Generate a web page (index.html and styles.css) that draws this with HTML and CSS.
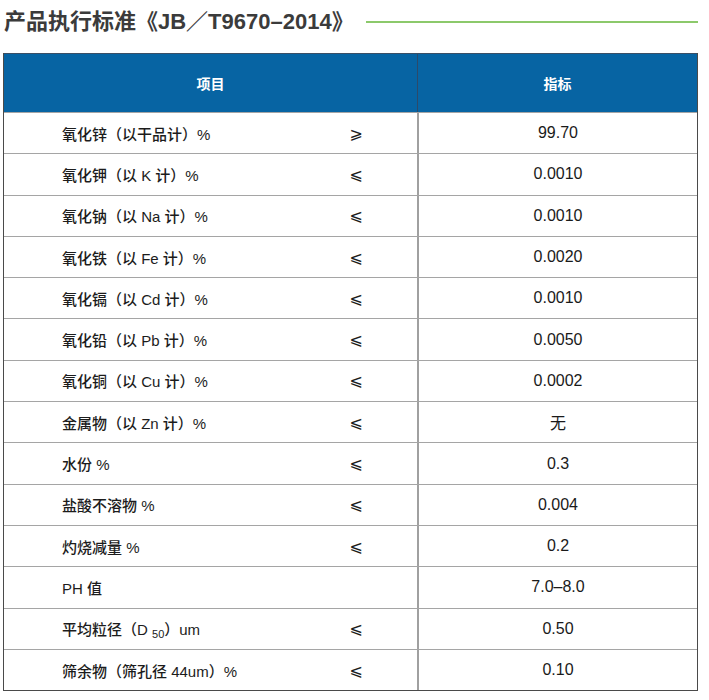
FILE: index.html
```html
<!DOCTYPE html>
<html lang="zh-CN">
<head>
<meta charset="utf-8">
<title>产品执行标准</title>
<link rel="stylesheet" href="styles.css">
</head>
<body>
<div class="page">
  <div class="title-bar">
    <h1 class="title">产品执行标准《JB／T9670–2014》</h1>
    <span class="title-line"></span>
  </div>
  <div class="spec-table">
    <div class="row head">
      <div class="cell-left">项目</div>
      <div class="cell-value">指标</div>
    </div>
    <div class="row">
      <div class="cell-left"><span class="name">氧化锌（以干品计）%</span><span class="sign">⩾</span></div>
      <div class="cell-value">99.70</div>
    </div>
    <div class="row">
      <div class="cell-left"><span class="name">氧化钾（以 K 计）%</span><span class="sign">⩽</span></div>
      <div class="cell-value">0.0010</div>
    </div>
    <div class="row">
      <div class="cell-left"><span class="name">氧化钠（以 Na 计）%</span><span class="sign">⩽</span></div>
      <div class="cell-value">0.0010</div>
    </div>
    <div class="row">
      <div class="cell-left"><span class="name">氧化铁（以 Fe 计）%</span><span class="sign">⩽</span></div>
      <div class="cell-value">0.0020</div>
    </div>
    <div class="row">
      <div class="cell-left"><span class="name">氧化镉（以 Cd 计）%</span><span class="sign">⩽</span></div>
      <div class="cell-value">0.0010</div>
    </div>
    <div class="row">
      <div class="cell-left"><span class="name">氧化铅（以 Pb 计）%</span><span class="sign">⩽</span></div>
      <div class="cell-value">0.0050</div>
    </div>
    <div class="row">
      <div class="cell-left"><span class="name">氧化铜（以 Cu 计）%</span><span class="sign">⩽</span></div>
      <div class="cell-value">0.0002</div>
    </div>
    <div class="row">
      <div class="cell-left"><span class="name">金属物（以 Zn 计）%</span><span class="sign">⩽</span></div>
      <div class="cell-value">无</div>
    </div>
    <div class="row">
      <div class="cell-left"><span class="name">水份 %</span><span class="sign">⩽</span></div>
      <div class="cell-value">0.3</div>
    </div>
    <div class="row">
      <div class="cell-left"><span class="name">盐酸不溶物 %</span><span class="sign">⩽</span></div>
      <div class="cell-value">0.004</div>
    </div>
    <div class="row">
      <div class="cell-left"><span class="name">灼烧减量 %</span><span class="sign">⩽</span></div>
      <div class="cell-value">0.2</div>
    </div>
    <div class="row">
      <div class="cell-left"><span class="name">PH 值</span><span class="sign"></span></div>
      <div class="cell-value">7.0–8.0</div>
    </div>
    <div class="row">
      <div class="cell-left"><span class="name">平均粒径（D <sub>50</sub>）um</span><span class="sign">⩽</span></div>
      <div class="cell-value">0.50</div>
    </div>
    <div class="row">
      <div class="cell-left"><span class="name">筛余物（筛孔径 44um）%</span><span class="sign">⩽</span></div>
      <div class="cell-value">0.10</div>
    </div>
  </div>
</div>
</body>
</html>
```

FILE: styles.css
```css
html, body {
  margin: 0;
  padding: 0;
  background: #ffffff;
}

.page {
  width: 709px;
  padding: 0 11px 0 3px;
  box-sizing: border-box;
  font-family: "Liberation Sans", "Noto Sans CJK SC", sans-serif;
  color: #1c1c1c;
}

.title-bar {
  display: flex;
  align-items: center;
  height: 44px;
  margin-bottom: 9px;
}

.title {
  margin: 0 0 0 1px;
  font-size: 22px;
  line-height: 24px;
  font-weight: 700;
  color: #3b3b3b;
  white-space: nowrap;
}

.title-line {
  flex: 1;
  height: 2px;
  margin-left: 12px;
  background: #8cc96b;
}

.spec-table {
  border: 1px solid #4a4a4a;
  border-top: none;
  width: 695px;
  box-sizing: border-box;
}

.row {
  display: grid;
  grid-template-columns: 413px 1fr;
  height: 41.3px;
  border-top: 1px solid #a5a5a5;
  box-sizing: border-box;
  font-size: 15px;
  font-weight: 500;
}

.row.head {
  height: 59px;
  border-top: 1px solid #3a4f66;
  background: #0764a3;
  color: #ffffff;
  font-size: 14px;
  font-weight: 700;
}

.cell-left {
  display: grid;
  grid-template-columns: 1fr 60px;
  align-items: center;
  padding: 0 31px 0 58px;
}

.head .cell-left {
  display: flex;
  justify-content: center;
  padding: 0;
}

.cell-value {
  display: flex;
  align-items: center;
  justify-content: center;
  border-left: 2px solid #a0a0a0;
  font-size: 16px;
  font-weight: 400;
  color: #1a1a1a;
}

.head .cell-value {
  border-left: 1px solid #2c4a6a;
  font-weight: 700;
  font-size: 14px;
  color: #ffffff;
}

.name {
  white-space: nowrap;
}

.name sub {
  font-size: 11px;
  vertical-align: -3px;
  line-height: 0;
}

.sign {
  text-align: center;
  font-family: "DejaVu Sans", sans-serif;
  font-weight: 400;
  font-size: 16px;
}
```
